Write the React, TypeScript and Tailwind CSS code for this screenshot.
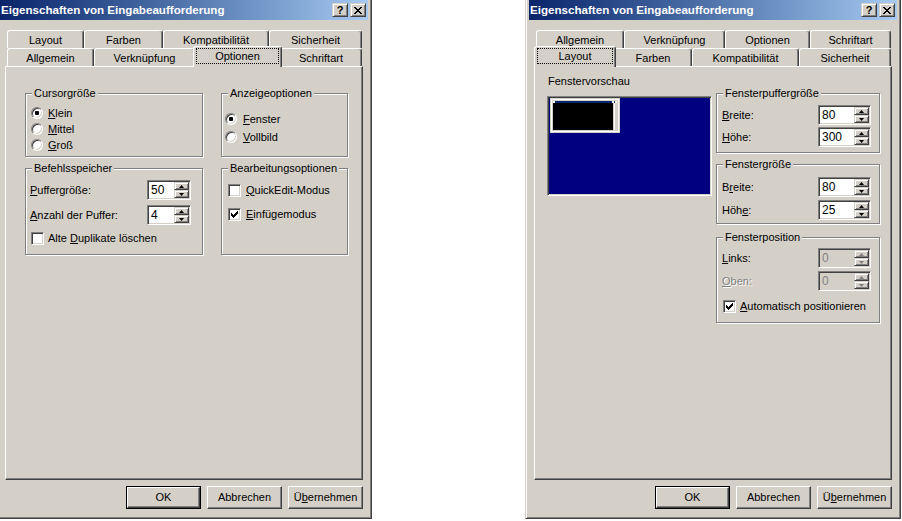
import React from "react";

type TabItem = { label: string; w: string; active?: boolean };

const raised =
  "border border-t-[#d4d0c8] border-l-[#d4d0c8] border-b-[#404040] border-r-[#404040] shadow-[inset_1px_1px_0_#fff,inset_-1px_-1px_0_#808080]";
const sunken =
  "border border-t-[#808080] border-l-[#808080] border-b-white border-r-white shadow-[inset_1px_1px_0_#404040,inset_-1px_-1px_0_#d4d0c8]";

const leftBack: TabItem[] = [
  { label: "Layout", w: "w-[77px]" },
  { label: "Farben", w: "w-[79px]" },
  { label: "Kompatibilität", w: "w-[106px]" },
  { label: "Sicherheit", w: "w-[93px]" },
];
const leftFront: TabItem[] = [
  { label: "Allgemein", w: "w-[87px]" },
  { label: "Verknüpfung", w: "w-[101px]" },
  { label: "Optionen", w: "w-[89px]", active: true },
  { label: "Schriftart", w: "w-[82px]" },
];
const rightBack: TabItem[] = [
  { label: "Allgemein", w: "w-[88px]" },
  { label: "Verknüpfung", w: "w-[101px]" },
  { label: "Optionen", w: "w-[85px]" },
  { label: "Schriftart", w: "w-[81px]" },
];
const rightFront: TabItem[] = [
  { label: "Layout", w: "w-[82px]", active: true },
  { label: "Farben", w: "w-[78px]" },
  { label: "Kompatibilität", w: "w-[107px]" },
  { label: "Sicherheit", w: "w-[92px]" },
];

function CaptionBtn({ children, className = "" }: { children: React.ReactNode; className?: string }) {
  return (
    <div className={`flex h-[14px] w-[16px] items-center justify-center bg-[#d4d0c8] ${raised} ${className}`}>
      {children}
    </div>
  );
}

function TitleBar() {
  return (
    <div className="flex h-[20px] shrink-0 items-center bg-linear-to-r from-[#0a246a] to-[#a6caf0] pl-[1px] pr-[2px]">
      <span className="flex-1 text-[11.6px] font-bold leading-none text-white">
        Eigenschaften von Eingabeaufforderung
      </span>
      <CaptionBtn>
        <span className="text-[11px] font-bold leading-none text-black">?</span>
      </CaptionBtn>
      <CaptionBtn className="ml-[2px]">
        {/* close glyph */}
        <svg width="8" height="7" viewBox="0 0 8 7" shapeRendering="crispEdges">
          <g fill="#000">
            <rect x="0" y="0" width="2" height="1" />
            <rect x="6" y="0" width="2" height="1" />
            <rect x="1" y="1" width="2" height="1" />
            <rect x="5" y="1" width="2" height="1" />
            <rect x="2" y="2" width="4" height="1" />
            <rect x="3" y="3" width="2" height="1" />
            <rect x="2" y="4" width="4" height="1" />
            <rect x="1" y="5" width="2" height="1" />
            <rect x="5" y="5" width="2" height="1" />
            <rect x="0" y="6" width="2" height="1" />
            <rect x="6" y="6" width="2" height="1" />
          </g>
        </svg>
      </CaptionBtn>
    </div>
  );
}

function Tab({ label, w, active }: TabItem) {
  if (active) {
    return (
      <div
        className={`${w} relative z-10 -mx-[2px] -mb-[1px] h-[21px] shrink-0 rounded-t-[3px] border-l border-t border-white border-r border-r-[#404040] bg-[#d4d0c8] px-[2px] pt-[1px] shadow-[inset_-1px_0_0_#808080]`}
      >
        <div className="flex h-[16px] items-center justify-center border border-dotted border-black">
          {label}
        </div>
      </div>
    );
  }
  return (
    <div
      className={`${w} flex h-[18px] shrink-0 items-center justify-center rounded-t-[3px] border-l border-t border-white border-r border-r-[#404040] pt-[1px] shadow-[inset_-1px_0_0_#808080]`}
    >
      {label}
    </div>
  );
}

const btnFace =
  "flex items-center justify-center border border-t-white border-l-white border-b-[#404040] border-r-[#404040] shadow-[inset_-1px_-1px_0_#808080]";

function Btn({ children, def }: { children: React.ReactNode; def?: boolean }) {
  if (def) {
    return (
      <div className="flex h-[23px] w-[75px] shrink-0 border border-black">
        <div className={`${btnFace} flex-1`}>{children}</div>
      </div>
    );
  }
  return <div className={`h-[23px] w-[75px] shrink-0 ${btnFace}`}>{children}</div>;
}

function Dialog({
  className,
  back,
  front,
  children,
}: {
  className: string;
  back: TabItem[];
  front: TabItem[];
  children: React.ReactNode;
}) {
  return (
    <div
      className={`-mt-[4px] flex h-[523px] w-[376px] shrink-0 flex-col border border-t-[#d4d0c8] border-l-[#d4d0c8] border-b-[#404040] border-r-[#404040] bg-[#d4d0c8] p-[3px] shadow-[inset_1px_1px_0_#fff,inset_-1px_-1px_0_#808080] ${className}`}
    >
      <TitleBar />
      <div className="mt-[10px] flex h-[18px] items-end pl-[7px]">
        {back.map((t) => (
          <Tab key={t.label} {...t} />
        ))}
      </div>
      <div className="flex h-[18px] items-end pl-[7px]">
        {front.map((t) => (
          <Tab key={t.label} {...t} />
        ))}
      </div>
      <div className="ml-[5px] h-[414px] w-[358px] border border-t-white border-l-white border-b-[#404040] border-r-[#404040] shadow-[inset_-1px_-1px_0_#808080]">
        {children}
      </div>
      <div className="ml-[5px] mt-[6px] flex w-[358px] justify-end gap-[6px]">
        <Btn def>OK</Btn>
        <Btn>Abbrechen</Btn>
        <Btn>
          <span>
            Ü<u>b</u>ernehmen
          </span>
        </Btn>
      </div>
    </div>
  );
}

function Group({
  title,
  className,
  children,
}: {
  title: string;
  className: string;
  children?: React.ReactNode;
}) {
  return (
    <div className={`relative border border-[#808080] shadow-[inset_1px_1px_0_#fff,1px_1px_0_#fff] ${className}`}>
      <span className="absolute -top-[7px] left-[6px] bg-[#d4d0c8] px-[2px] leading-[13px]">{title}</span>
      {children}
    </div>
  );
}

function Radio({ checked }: { checked?: boolean }) {
  return (
    <span
      className={`flex h-[12px] w-[12px] shrink-0 items-center justify-center rounded-full bg-white ${sunken}`}
    >
      {checked && <span className="h-[4px] w-[4px] rounded-[1px] bg-black" />}
    </span>
  );
}

function Check({ checked }: { checked?: boolean }) {
  return (
    <span className={`flex h-[13px] w-[13px] shrink-0 items-center justify-center bg-white ${sunken}`}>
      {checked && (
        <svg width="7" height="7" viewBox="0 0 7 7" shapeRendering="crispEdges">
          <g fill="#000">
            <rect x="6" y="0" width="1" height="1" />
            <rect x="5" y="1" width="2" height="1" />
            <rect x="0" y="2" width="1" height="1" />
            <rect x="4" y="2" width="3" height="1" />
            <rect x="0" y="3" width="2" height="1" />
            <rect x="3" y="3" width="3" height="1" />
            <rect x="0" y="4" width="5" height="1" />
            <rect x="1" y="5" width="3" height="1" />
            <rect x="2" y="6" width="1" height="1" />
          </g>
        </svg>
      )}
    </span>
  );
}

function SpinBtn({ up, disabled }: { up?: boolean; disabled?: boolean }) {
  return (
    <span className={`flex h-[8px] items-center justify-center bg-[#d4d0c8] ${raised}`}>
      <svg width="5" height="3" viewBox="0 0 5 3">
        <path d={up ? "M2.5 0L5 3H0Z" : "M0 0H5L2.5 3Z"} fill={disabled ? "#808080" : "#000"} />
      </svg>
    </span>
  );
}

function Spin({ value, w, disabled }: { value: string; w: string; disabled?: boolean }) {
  return (
    <div
      className={`flex h-[20px] ${w} shrink-0 p-[1px] ${sunken} ${disabled ? "bg-[#d4d0c8] text-[#808080]" : "bg-white"}`}
    >
      <span className="flex flex-1 items-center pl-[2px] text-[12px]">{value}</span>
      <span className="flex w-[15px] flex-col">
        <SpinBtn up disabled={disabled} />
        <SpinBtn disabled={disabled} />
      </span>
    </div>
  );
}

function OptionenPage() {
  return (
    <div className="grid grid-cols-[178px_127px] gap-x-[18px] gap-y-[11px] pl-[19px] pt-[26px]">
      <Group title="Cursorgröße" className="h-[64px] pl-[5px] pt-[11px]">
        <div className="flex h-[16px] items-center gap-[5px]">
          <Radio checked />
          <span>
            <u>K</u>lein
          </span>
        </div>
        <div className="flex h-[16px] items-center gap-[5px]">
          <Radio />
          <span>
            <u>M</u>ittel
          </span>
        </div>
        <div className="flex h-[16px] items-center gap-[5px]">
          <Radio />
          <span>
            <u>G</u>roß
          </span>
        </div>
      </Group>
      <Group title="Anzeigeoptionen" className="h-[64px] pl-[3px] pt-[16px]">
        <div className="flex h-[18px] items-center gap-[6px]">
          <Radio checked />
          <span>
            <u>F</u>enster
          </span>
        </div>
        <div className="flex h-[18px] items-center gap-[6px]">
          <Radio />
          <span>
            <u>V</u>ollbild
          </span>
        </div>
      </Group>
      <Group title="Befehlsspeicher" className="flex h-[87px] flex-col gap-[5px] pl-[4px] pr-[11px] pt-[11px]">
        <div className="flex h-[20px] items-center justify-between">
          <span>
            <u>P</u>uffergröße:
          </span>
          <Spin value="50" w="w-[44px]" />
        </div>
        <div className="flex h-[20px] items-center justify-between">
          <span>
            <u>A</u>nzahl der Puffer:
          </span>
          <Spin value="4" w="w-[44px]" />
        </div>
        <div className="ml-[1px] flex h-[16px] items-center gap-[4px]">
          <Check />
          <span>
            Alte <u>D</u>uplikate löschen
          </span>
        </div>
      </Group>
      <Group title="Bearbeitungsoptionen" className="flex h-[87px] flex-col gap-[8px] pl-[6px] pt-[13px]">
        <div className="flex h-[16px] items-center gap-[5px]">
          <Check />
          <span>
            <u>Q</u>uickEdit-Modus
          </span>
        </div>
        <div className="flex h-[16px] items-center gap-[5px]">
          <Check checked />
          <span>
            <u>E</u>infügemodus
          </span>
        </div>
      </Group>
    </div>
  );
}

function SpinRow({
  label,
  value,
  disabled,
  labelDisabled,
}: {
  label: React.ReactNode;
  value: string;
  disabled?: boolean;
  labelDisabled?: boolean;
}) {
  return (
    <div className="flex h-[20px] items-center justify-between">
      <span className={labelDisabled ? "text-[#808080] [text-shadow:1px_1px_0_#fff]" : ""}>{label}</span>
      <Spin value={value} w="w-[53px]" disabled={disabled} />
    </div>
  );
}

function LayoutPage() {
  return (
    <div className="flex pl-[12px] pt-[8px]">
      <div className="flex flex-col">
        <span className="ml-[1px]">Fenstervorschau</span>
        <div className={`mt-[8px] h-[100px] w-[165px] bg-[#000080] p-[1px] ${sunken}`}>
          <svg
            width="70"
            height="35"
            viewBox="0 0 70 35"
            shapeRendering="crispEdges"
            className="ml-[1px] block"
          >
            <rect width="70" height="35" fill="#d4d0c8" />
            <rect x="1" y="1" width="68" height="33" fill="#fff" />
            <rect x="2" y="2" width="66" height="31" fill="#d4d0c8" />
            <rect x="3" y="3" width="64" height="2" fill="#0a246a" />
            <rect x="3" y="3" width="2" height="2" fill="#fff" />
            <rect x="62" y="3" width="2" height="2" fill="#fff" />
            <rect x="65" y="3" width="2" height="2" fill="#fff" />
            <rect x="3" y="5" width="60" height="27" fill="#000" />
            <rect x="63" y="5" width="4" height="27" fill="#d4d0c8" />
            <rect x="64" y="5" width="1" height="27" fill="#fff" />
          </svg>
        </div>
      </div>
      <div className="ml-[4px] mt-[18px] flex flex-col">
        <Group title="Fensterpuffergröße" className="flex h-[60px] w-[164px] flex-col gap-[2px] pl-[5px] pr-[8px] pt-[11px]">
          <SpinRow
            label={
              <>
                <u>B</u>reite:
              </>
            }
            value="80"
          />
          <SpinRow
            label={
              <>
                <u>H</u>öhe:
              </>
            }
            value="300"
          />
        </Group>
        <Group title="Fenstergröße" className="mt-[11px] flex h-[60px] w-[164px] flex-col gap-[3px] pl-[5px] pr-[8px] pt-[12px]">
          <SpinRow
            label={
              <>
                B<u>r</u>eite:
              </>
            }
            value="80"
          />
          <SpinRow
            label={
              <>
                Höh<u>e</u>:
              </>
            }
            value="25"
          />
        </Group>
        <Group title="Fensterposition" className="mt-[13px] flex h-[86px] w-[164px] flex-col gap-[3px] pl-[5px] pr-[8px] pt-[10px]">
          <SpinRow
            label={
              <>
                <u>L</u>inks:
              </>
            }
            value="0"
            disabled
          />
          <SpinRow
            label={
              <>
                <u>O</u>ben:
              </>
            }
            value="0"
            disabled
            labelDisabled
          />
          <div className="ml-[1px] mt-[4px] flex h-[16px] items-center gap-[4px]">
            <Check checked />
            <span>
              <u>A</u>utomatisch positionieren
            </span>
          </div>
        </Group>
      </div>
    </div>
  );
}

export default function App() {
  return (
    <div className="flex h-[521px] w-[902px] items-start overflow-hidden bg-white font-['Liberation_Sans',Arial,sans-serif] text-[11px] leading-[13px] text-black">
      <Dialog className="-ml-[4px]" back={leftBack} front={leftFront}>
        <OptionenPage />
      </Dialog>
      <Dialog className="ml-[153px]" back={rightBack} front={rightFront}>
        <LayoutPage />
      </Dialog>
    </div>
  );
}
